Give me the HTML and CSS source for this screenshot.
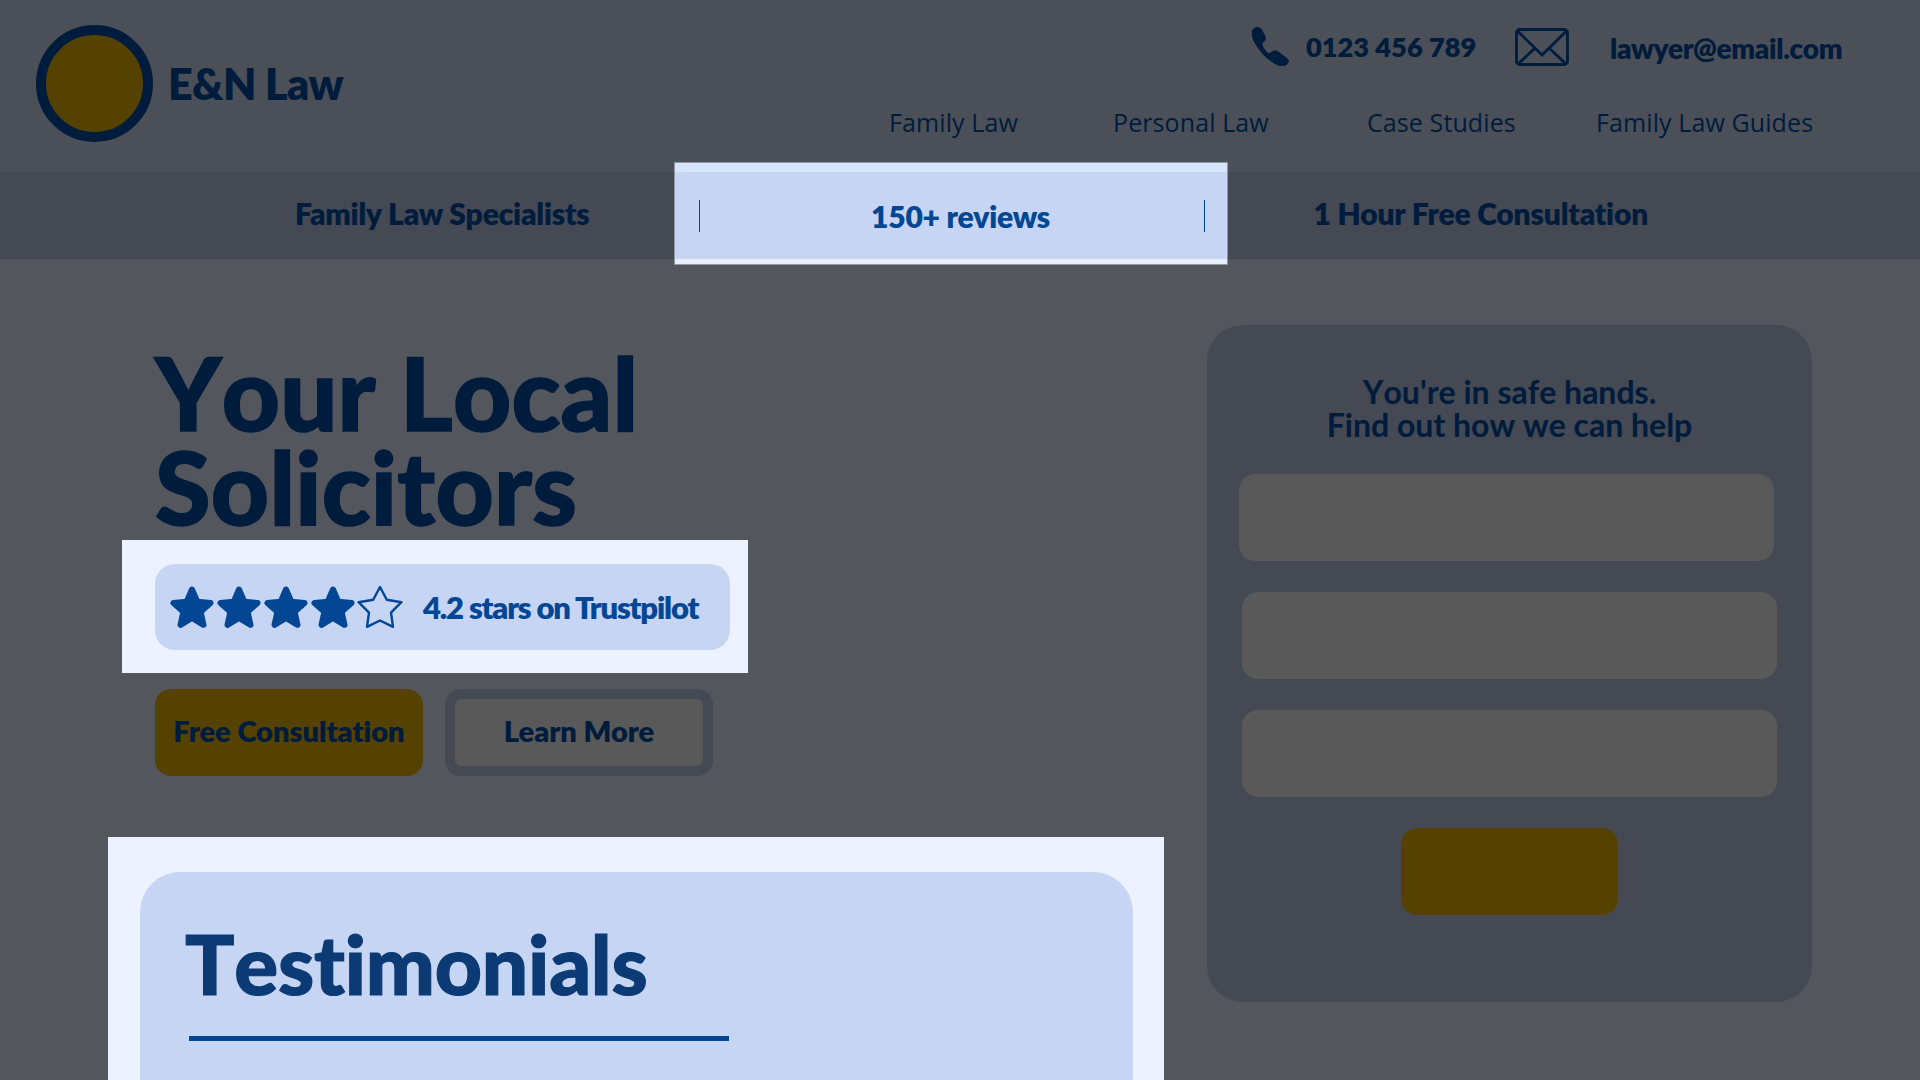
FILE: index.html
```html
<!DOCTYPE html>
<html lang="en">
<head>
<meta charset="utf-8">
<title>E&amp;N Law</title>
<link rel="stylesheet" href="styles.css">
</head>
<body>
<svg class="defs" width="0" height="0" aria-hidden="true">
  <symbol id="star" viewBox="0 0 46 44"><polygon points="23,4.5 28.3,16.7 41.5,18 31.6,26.8 34.5,39.8 23,33 11.5,39.8 14.4,26.8 4.5,18 17.7,16.7"/></symbol>
  <symbol id="star-outline" viewBox="0 0 46 44"><polygon points="23,2 29.8,14.7 44.4,17.2 34,27.6 36,41.8 23,35.5 10,41.8 12,27.6 1.6,17.2 16.2,14.7"/></symbol>
</svg>
<header class="header">
  <div class="brand">
    <div class="logo"></div>
    <div class="brand-name">E&amp;N Law</div>
  </div>
  <div class="header-right">
    <div class="contacts">
      <svg class="icon-phone" viewBox="0 0 40 40"><path d="M3 2C6-.5 10 .5 11.5 3L15 10C16 13 14 15 12 16.5C11.5 17.5 12 19 13 21C15 24.5 17 27 19 27.5L23 25C25 24 27 24.5 29 26L37 32C39.5 34 39.5 36 37.5 38C35 40 31 40.5 27 38.5C18 34 9 25 3.5 14C1.5 9 1 4 3 2Z"/></svg>
      <span class="phone">0123 456 789</span>
      <svg class="icon-mail" viewBox="0 0 54 38"><rect x="1.5" y="1.5" width="51" height="35" rx="3"/><path d="M2.5 3L27 27L51.5 3M3 36L20 20M51 36L34 20"/></svg>
      <span class="email">lawyer@email.com</span>
    </div>
    <nav class="nav">
      <a>Family Law</a>
      <a>Personal Law</a>
      <a>Case Studies</a>
      <a>Family Law Guides</a>
    </nav>
  </div>
</header>
<section class="band">
  <div class="band-left">Family Law Specialists</div>
  <div class="band-right">1 Hour Free Consultation</div>
  <div class="band-spot">
    <i class="divider"></i>
    <span class="band-reviews">150+ reviews</span>
    <i class="divider"></i>
  </div>
</section>
<main class="main">
  <div class="hero">
    <h1 class="title">Your Local<br>Solicitors</h1>
    <div class="rating-spot">
      <div class="rating">
        <div class="stars">
          <svg class="star"><use href="#star"/></svg>
          <svg class="star"><use href="#star"/></svg>
          <svg class="star"><use href="#star"/></svg>
          <svg class="star"><use href="#star"/></svg>
          <svg class="star star-empty"><use href="#star-outline"/></svg>
        </div>
        <span class="rating-text">4.2 stars on Trustpilot</span>
      </div>
    </div>
    <div class="actions">
      <a class="btn btn-gold">Free Consultation</a>
      <a class="btn btn-outline">Learn More</a>
    </div>
    <div class="testimonials-spot">
      <section class="testimonials">
        <h2 class="testimonials-title">Testimonials</h2>
        <div class="rule"></div>
      </section>
    </div>
  </div>
  <aside class="form-card">
    <h3 class="form-title">You're in safe hands.<br>Find out how we can help</h3>
    <div class="field field-first"></div>
    <div class="field"></div>
    <div class="field"></div>
    <div class="submit"></div>
  </aside>
</main>
</body>
</html>
```
FILE: styles.css
```css
* { box-sizing: border-box; margin: 0; padding: 0; }
html, body { width: 1920px; height: 1080px; overflow: hidden; }
body { background: #53565c; color: #001c3d; font-family: Lato, "Liberation Sans", sans-serif; font-weight: 800; font-variant-ligatures: none; -webkit-text-stroke: 0.1px; }
.defs { position: absolute; }

.header { height: 172px; background: #4b4f58; display: flex; justify-content: space-between; }
.brand { display: flex; align-items: center; margin: 25px 0 0 36px; height: 117px; }
.logo { width: 117px; height: 117px; border-radius: 50%; background: #564200; border: 10px solid #001c3d; }
.brand-name { font-size: 43px; margin-left: 15px; letter-spacing: -0.6px; }
.header-right { width: 1031px; }
.contacts { display: flex; align-items: center; height: 38px; margin: 27px 0 0 361px; }
.icon-phone { width: 40px; height: 39px; fill: #001c3d; stroke: #001c3d; stroke-width: 1; flex: none; }
.phone { font-size: 27.2px; margin-left: 16px; width: 208px; }
.icon-mail { width: 54px; height: 38px; fill: none; stroke: #001c3d; stroke-width: 2.8; flex: none; margin: 2px 0 0 1px; }
.email { font-size: 28px; margin: 3px 0 0 41px; letter-spacing: -0.3px; }
.nav { display: grid; grid-template-columns: 224px 254px 229px auto; margin-top: 41px; font-family: "Open Sans", sans-serif; font-weight: 400; font-size: 25px; line-height: 33px; letter-spacing: 0.1px; -webkit-text-stroke: 0; }

.band { position: relative; height: 87px; background: #454954; font-size: 30px; letter-spacing: -0.17px; display: flex; align-items: center; }
.band-left { margin: -5px 0 0 295px; }
.band-right { margin: -5px 0 0 724px; }
.band-spot { position: absolute; left: 675px; top: -9px; width: 552px; height: 101px; background: #c5d5f3; border-top: 9px solid #d6e4ff; border-bottom: 5px solid #e6eeff; display: flex; align-items: center; justify-content: space-between; padding: 0 22px 0 24px; color: #034694; box-shadow: 0 0 0 1px #8e96a6; }
.divider { display: block; width: 1px; height: 32px; background: #034694; }
.band-reviews { font-size: 30px; margin-left: 17px; }

.main { display: flex; align-items: flex-start; }
.hero { width: 1207px; padding-left: 155px; }
.title { font-size: 101px; font-weight: 900; line-height: 94px; margin-top: 86px; font-kerning: none; letter-spacing: 0.2px; -webkit-text-stroke: 1.6px; }
.rating-spot { width: 626px; height: 133px; margin: 7px 0 0 -33px; padding: 24px 18px 23px 33px; background: #ecf2ff; }
.rating { height: 86px; border-radius: 20px; background: #c5d5f3; display: flex; align-items: center; padding-left: 14px; color: #034694; }
.stars { display: flex; gap: 1px; }
.star { width: 46px; height: 44px; fill: #034694; stroke: #034694; stroke-width: 6; stroke-linejoin: round; }
.star-empty { fill: none; stroke-width: 2.4; }
.rating-text { font-size: 31px; margin-left: 20px; letter-spacing: -1.16px; }
.actions { display: flex; gap: 22px; margin-top: 16px; font-size: 29px; }
.btn { display: flex; align-items: center; justify-content: center; height: 87px; border-radius: 16px; padding-bottom: 4px; }
.btn-gold { width: 268px; background: #564200; }
.btn-outline { width: 268px; background: #595959; border: 10px solid #454954; }
.testimonials-spot { width: 1056px; height: 260px; margin: 61px 0 0 -47px; padding: 35px 31px 0 32px; background: #ecf2ff; }
.testimonials { height: 300px; border-radius: 40px; background: #c5d5f3; padding: 42px 0 0 45px; color: #0b3a75; }
.testimonials-title { font-size: 82px; font-weight: 900; line-height: 98px; font-kerning: none; letter-spacing: -0.25px; -webkit-text-stroke: 1.2px; }
.rule { width: 540px; height: 5px; margin: 24px 0 0 4px; background: #034694; }

.form-card { width: 605px; height: 677px; margin-top: 66px; border-radius: 36px; background: #454954; padding: 50px 32px 0; display: flex; flex-direction: column; align-items: flex-start; }
.form-title { width: 541px; font-size: 32px; line-height: 33px; text-align: center; margin-bottom: 33px; font-kerning: none; }
.field { width: 535px; height: 87px; border-radius: 16px; background: #595959; margin: 31px 0 0 3px; }
.field-first { margin: 0; }
.submit { width: 217px; height: 87px; border-radius: 16px; background: #564200; margin: 31px 0 0 162px; }
```
